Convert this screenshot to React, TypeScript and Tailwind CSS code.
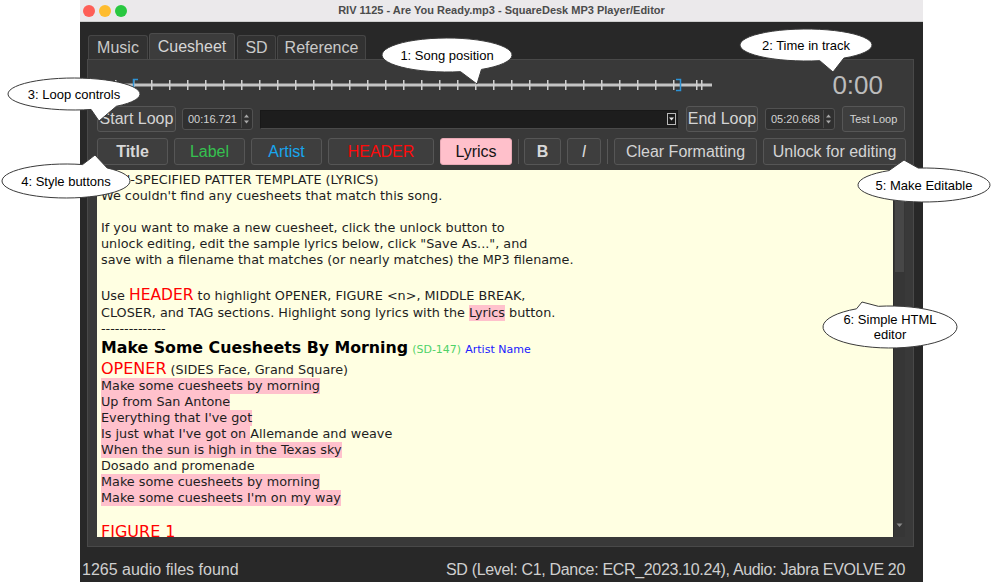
import React from "react";

type BubbleSpec = {
    cx: number;
    cy: number;
    rx: number;
    ry: number;
    a1: number;
    a2: number;
    tx: number;
    ty: number;
    lines: string[];
};

const bubbles: BubbleSpec[] = [
    { cx: 447, cy: 55, rx: 65, ry: 17, a1: 58, a2: 78, tx: 477, ty: 84, lines: ["1: Song position"] },
    { cx: 806, cy: 45, rx: 66, ry: 16, a1: 55, a2: 78, tx: 833, ty: 72, lines: ["2: Time in track"] },
    { cx: 74, cy: 94, rx: 66, ry: 16, a1: 50, a2: 75, tx: 99, ty: 121, lines: ["3: Loop controls"] },
    { cx: 66, cy: 181, rx: 64, ry: 17, a1: -75, a2: -50, tx: 95, ty: 155, lines: ["4: Style buttons"] },
    { cx: 924, cy: 185, rx: 66, ry: 17, a1: -122, a2: -95, tx: 904, ty: 160, lines: ["5: Make Editable"] },
    { cx: 890, cy: 327, rx: 67, ry: 21, a1: -120, a2: -100, tx: 862, ty: 302, lines: ["6: Simple HTML", "editor"] },
];

function bubblePath(b: BubbleSpec) {
    const rad = (d: number) => (d * Math.PI) / 180;
    const x1 = b.cx + b.rx * Math.cos(rad(b.a1));
    const y1 = b.cy + b.ry * Math.sin(rad(b.a1));
    const x2 = b.cx + b.rx * Math.cos(rad(b.a2));
    const y2 = b.cy + b.ry * Math.sin(rad(b.a2));
    return `M ${x2} ${y2} A ${b.rx} ${b.ry} 0 1 1 ${x1} ${y1} L ${b.tx} ${b.ty} Z`;
}

const Callouts = () => (
    <>
        <svg className="absolute left-0 top-0 pointer-events-none" width="992" height="582">
            {bubbles.map((b, i) => (
                <path key={i} d={bubblePath(b)} fill="#fff" stroke="#3a3a3a" strokeWidth="1" />
            ))}
        </svg>
        {bubbles.map((b, i) => (
            <div
                key={i}
                className="absolute flex flex-col items-center justify-center text-center text-[13px] leading-[15px] text-black"
                style={{ left: b.cx - b.rx, top: b.cy - b.ry, width: b.rx * 2, height: b.ry * 2 }}
            >
                {b.lines.map((l) => (
                    <span key={l}>{l}</span>
                ))}
            </div>
        ))}
    </>
);

const TitleBar = () => (
    <div className="grid h-[22px] grid-cols-[1fr_auto_1fr] items-center border-b border-[#cdcdcd] bg-[#ebe9eb]">
        <div className="flex items-center gap-[4px] pl-[3px]">
            <span className="h-[12px] w-[12px] rounded-full bg-[#fe5f57]" />
            <span className="h-[12px] w-[12px] rounded-full bg-[#febc2e]" />
            <span className="h-[12px] w-[12px] rounded-full bg-[#29c840]" />
        </div>
        <div className="text-[11px] font-semibold text-[#4c4c4c]">RIV 1125 - Are You Ready.mp3 - SquareDesk MP3 Player/Editor</div>
        <div />
    </div>
);

const Tabs = () => (
    <div className="mt-[11px] flex h-[26px] items-end gap-[1px] pl-[8px]">
        <div className="flex h-[24px] w-[60px] items-center justify-center rounded-t-[3px] border border-b-0 border-[#464646] bg-[#323232] text-[16px] text-[#c9c9c9]">Music</div>
        <div className="flex h-[26px] w-[86px] items-center justify-center rounded-t-[3px] border border-b-0 border-[#4c4c4c] bg-[#3c3c3c] text-[16px] text-[#d6d6d6]">Cuesheet</div>
        <div className="ml-[1px] flex h-[24px] w-[39px] items-center justify-center rounded-t-[3px] border border-b-0 border-[#464646] bg-[#323232] text-[16px] text-[#c9c9c9]">SD</div>
        <div className="flex h-[24px] w-[89px] items-center justify-center rounded-t-[3px] border border-b-0 border-[#464646] bg-[#323232] text-[16px] text-[#c9c9c9]">Reference</div>
    </div>
);

const SongSlider = () => {
    const ticks: number[] = [];
    for (let x = 17; x <= 580; x += 18) ticks.push(x);
    return (
        <svg width="620" height="16" className="ml-[1px] shrink-0">
            <rect x="2" y="6.5" width="612" height="3" fill="#c4c4c4" />
            {ticks.map((x) => (
                <rect key={x} x={x} y="3" width="1.5" height="10" fill="#cfcfcf" />
            ))}
            <rect x="598" y="3" width="1.5" height="10" fill="#cfcfcf" />
            <rect x="603" y="3" width="1.5" height="10" fill="#cfcfcf" />
            {/* loop start / end markers */}
            <path d="M35.5 12 V2.5 H40" fill="none" stroke="#2e93d6" strokeWidth="1.5" />
            <path d="M578 2.5 H582.5 V13.5 H578" fill="none" stroke="#2e93d6" strokeWidth="1.5" />
        </svg>
    );
};

const Btn = ({ className, children }: { className: string; children: React.ReactNode }) => (
    <div className={"flex shrink-0 items-center justify-center rounded-[3px] border border-[#565656] bg-[#3e3e3e] " + className}>{children}</div>
);

const Spin = ({ value, className }: { value: string; className: string }) => (
    <div className={"flex h-[22px] shrink-0 items-center rounded-[3px] border border-[#515151] bg-[#303030] pl-[5px] text-[11px] text-[#d2d2d2] " + className}>
        <span className="flex-1">{value}</span>
        <div className="mr-[1px] flex h-[18px] w-[10px] items-center justify-center border-l border-[#4a4a4a]">
            <svg width="7" height="14">
                <path d="M1 5.5 L3.5 2.5 L6 5.5 Z" fill="#a9a9a9" />
                <path d="M1 8.5 L3.5 11.5 L6 8.5 Z" fill="#a9a9a9" />
            </svg>
        </div>
    </div>
);

const Sep = () => <div className="h-[25px] w-px shrink-0 bg-[#575757]" />;

const pink = "inline-block h-[16px] bg-[#ffc1cc] align-top";

const Editor = () => (
    <div className="mt-[5px] flex h-[367px]">
        <div className="flex-1 overflow-hidden bg-[#ffffe2] pl-[4px] pt-[2px] font-['DejaVu_Sans',Verdana,sans-serif] text-[12.8px] leading-[16px] text-[#1e1e1e]">
            <div className="h-[16px]">NON-SPECIFIED PATTER TEMPLATE (LYRICS)</div>
            <div className="h-[16px]">We couldn't find any cuesheets that match this song.</div>
            <div className="h-[16px]" />
            <div className="h-[16px]">If you want to make a new cuesheet, click the unlock button to</div>
            <div className="h-[16px]">unlock editing, edit the sample lyrics below, click "Save As...", and</div>
            <div className="h-[16px]">save with a filename that matches (or nearly matches) the MP3 filename.</div>
            <div className="h-[16px]" />
            <div className="h-[21px] leading-[23px]">
                Use <span className="text-[15.5px] text-[#ff0000]">HEADER</span> to highlight OPENER, FIGURE &lt;n&gt;, MIDDLE BREAK,
            </div>
            <div className="h-[16px]">
                CLOSER, and TAG sections. Highlight song lyrics with the <span className={pink}>Lyrics</span> button.
            </div>
            <div className="h-[16px]">--------------</div>
            <div className="h-[21px] leading-[22px]">
                <b className="text-[15.8px] text-black">Make Some Cuesheets By Morning</b>{" "}
                <span className="text-[11px] text-[#4fd268]">(SD-147)</span>{" "}
                <span className="text-[11px] text-[#2020ff]">Artist Name</span>
            </div>
            <div className="h-[20px] leading-[21px]">
                <span className="text-[16px] text-[#ff0000]">OPENER</span> (SIDES Face, Grand Square)
            </div>
            <div className="h-[16px]"><span className={pink}>Make some cuesheets by morning</span></div>
            <div className="h-[16px]"><span className={pink}>Up from San Antone</span></div>
            <div className="h-[16px]"><span className={pink}>Everything that I've got</span></div>
            <div className="h-[16px]"><span className={pink}>Is just what I've got on{"\u00a0"}</span>Allemande and weave</div>
            <div className="h-[16px]"><span className={pink}>When the sun is high in the Texas sky</span></div>
            <div className="h-[16px]">Dosado and promenade</div>
            <div className="h-[16px]"><span className={pink}>Make some cuesheets by morning</span></div>
            <div className="h-[16px]"><span className={pink}>Make some cuesheets I'm on my way</span></div>
            <div className="h-[16px]" />
            <div className="h-[20px] leading-[20px]">
                <span className="text-[16px] text-[#ff0000]">FIGURE 1</span>
            </div>
        </div>
        {/* scrollbar */}
        <div className="flex w-[12px] flex-col border-l border-[#2c2c2c] bg-[#363636]">
            <div className="mx-[1px] h-[102px] bg-[#474747]" />
            <div className="flex-1" />
            <div className="flex h-[14px] items-start justify-center">
                <svg width="7" height="5">
                    <path d="M0.5 0.5 L3.5 4 L6.5 0.5 Z" fill="#8a8a8a" />
                </svg>
            </div>
        </div>
    </div>
);

const Panel = () => (
    <div className="ml-[7px] mr-[9px] flex h-[488px] flex-col border border-[#494949] bg-[#393939] pl-[9px] pr-[8px]">
        {/* song position + time */}
        <div className="flex h-[46px] items-center pt-[4px]">
            <SongSlider />
            <div className="ml-auto mr-[22px] text-[26px] leading-none text-[#bcbcbc]">0:00</div>
        </div>

        {/* loop controls */}
        <div className="flex h-[26px] items-center">
            <Btn className="h-[26px] w-[79px] text-[16px] text-[#d4d4d4]">Start Loop</Btn>
            <Spin value="00:16.721" className="ml-[6px] w-[71px]" />
            <div className="ml-[7px] flex h-[19px] flex-1 items-center justify-end border border-[#181818] border-b-[#4a4a4a] bg-[#1d1d1d] pr-[1px]">
                <div className="flex h-[12px] w-[9px] items-center justify-center border border-[#b9b9b9] bg-[#1a1a1a]">
                    <svg width="5" height="4">
                        <path d="M0 0.5 L2.5 3.5 L5 0.5 Z" fill="#e6e6e6" />
                    </svg>
                </div>
            </div>
            <Btn className="ml-[8px] h-[26px] w-[72px] text-[16px] text-[#d4d4d4]">End Loop</Btn>
            <Spin value="05:20.668" className="ml-[7px] w-[70px]" />
            <Btn className="ml-[7px] h-[26px] w-[63px] text-[11px] text-[#d4d4d4]">Test Loop</Btn>
        </div>

        {/* style buttons */}
        <div className="mt-[6px] flex h-[27px] items-center gap-[6px]">
            <Btn className="h-[27px] w-[71px] text-[16px] font-bold text-[#d8d8d8]">Title</Btn>
            <Btn className="h-[27px] w-[71px] text-[16px] text-[#35c24f]">Label</Btn>
            <Btn className="h-[27px] w-[71px] text-[16px] text-[#18a6ee]">Artist</Btn>
            <Btn className="h-[27px] w-[106px] text-[16px] text-[#ff0a0a]">HEADER</Btn>
            <div className="flex h-[27px] w-[72px] shrink-0 items-center justify-center rounded-[3px] border border-[#e7a9b5] bg-[#ffc0cb] text-[16px] text-[#141414]">Lyrics</div>
            <Sep />
            <Btn className="-ml-[1px] h-[27px] w-[37px] text-[16px] font-bold text-[#d8d8d8]">B</Btn>
            <Btn className="h-[27px] w-[34px] text-[16px] italic text-[#d8d8d8]">I</Btn>
            <Sep />
            <Btn className="h-[27px] w-[143px] text-[16px] text-[#d4d4d4]">Clear Formatting</Btn>
            <Btn className="h-[27px] w-[143px] text-[16px] text-[#d4d4d4]">Unlock for editing</Btn>
        </div>

        <Editor />
    </div>
);

const StatusBar = () => (
    <div className="flex flex-1 items-end justify-between pb-[3px] pl-[2px] pr-[18px] text-[16px] leading-[18px] text-[#cfcfcf]">
        <span>1265 audio files found</span>
        <span className="tracking-[-0.33px]">SD (Level: C1, Dance: ECR_2023.10.24), Audio: Jabra EVOLVE 20</span>
    </div>
);

export default function App() {
    return (
        <div className="relative h-[582px] w-[992px] overflow-hidden bg-white font-['Liberation_Sans',Arial,sans-serif]">
            <div className="ml-[80px] flex h-[582px] w-[843px] flex-col bg-[#282828]">
                <TitleBar />
                <Tabs />
                <Panel />
                <StatusBar />
            </div>
            <Callouts />
        </div>
    );
}
